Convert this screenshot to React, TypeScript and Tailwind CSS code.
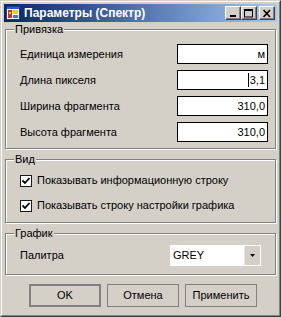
import React from 'react';

const font = "font-['Liberation_Sans',Arial,sans-serif]";

function TitleIcon() {
    return (
        <svg width="14" height="14" viewBox="0 0 14 14" className="shrink-0">
            <rect x="0.5" y="0.5" width="13" height="13" fill="#ffffff" stroke="#1c3c8c" />
            <rect x="1" y="1" width="12" height="2" fill="#2a5ad0" />
            <rect x="2" y="4" width="4" height="8" fill="#d83020" />
            <rect x="3" y="6" width="2" height="2" fill="#f8d048" />
            <rect x="7" y="4" width="5" height="4" fill="#f8c800" />
            <rect x="7" y="9" width="5" height="3" fill="#3a78e0" />
        </svg>
    );
}

function CaptionButton({ kind }: { kind: 'min' | 'max' | 'close' }) {
    return (
        <div className="flex h-[14px] w-[16px] items-center justify-center border border-t-white border-l-white border-r-[#404040] border-b-[#404040] bg-[#d4d0c8] shadow-[inset_-1px_-1px_0_#808080]">
            <svg width="10" height="9" viewBox="0 0 10 9">
                {kind === 'min' && <rect x="2" y="6" width="6" height="2" fill="#000" />}
                {kind === 'max' && (
                    <g fill="none" stroke="#000">
                        <rect x="0.5" y="0.5" width="8" height="7.5" />
                        <line x1="0" y1="1.5" x2="9" y2="1.5" />
                    </g>
                )}
                {kind === 'close' && (
                    <g stroke="#000" strokeWidth="1.6">
                        <line x1="1.5" y1="1" x2="8" y2="8" />
                        <line x1="8" y1="1" x2="1.5" y2="8" />
                    </g>
                )}
            </svg>
        </div>
    );
}

function Group({ title, className, children }: { title: string; className: string; children: React.ReactNode }) {
    return (
        <div className={`relative mx-[1px] border border-[#808080] shadow-[inset_1px_1px_0_#fff,1px_1px_0_#fff] ${className}`}>
            <span className="absolute -top-[8px] left-[8px] bg-[#d4d0c8] px-[1px] leading-[14px]">{title}</span>
            {children}
        </div>
    );
}

function Field({ label, value, caret }: { label: string; value: string; caret?: boolean }) {
    return (
        <div className="flex h-[20px] items-center justify-between">
            <span>{label}</span>
            <div className="flex h-[20px] w-[91px] items-center justify-end border border-black bg-white pr-[2px]">
                {caret && <span className="mr-[1px] h-[14px] w-[1px] bg-black" />}
                <span className="leading-none">{value}</span>
            </div>
        </div>
    );
}

function Check({ label }: { label: string }) {
    return (
        <div className="flex h-[15px] items-center gap-[5px]">
            <div className="flex h-[12px] w-[12px] items-center justify-center border border-[#1a1a1a] bg-white">
                <svg width="10" height="10" viewBox="0 0 10 10">
                    <polyline points="1.5,4.5 4,7 8.5,2" fill="none" stroke="#000" strokeWidth="1.8" />
                </svg>
            </div>
            <span>{label}</span>
        </div>
    );
}

export default function App() {
    return (
        <div className={`h-[317px] w-[281px] border border-t-[#d4d0c8] border-l-[#d4d0c8] border-r-[#404040] border-b-[#404040] bg-[#d4d0c8] text-[11px] text-black ${font}`}>
            <div className="flex h-full flex-col border border-t-white border-l-white border-r-[#808080] border-b-[#808080] p-[2px]">
                <div className="flex h-[18px] items-center bg-gradient-to-r from-[#0a246a] to-[#a6caf0] pl-[2px] pr-[2px]">
                    <TitleIcon />
                    <span className="ml-[4px] text-[12px] font-bold text-white">Параметры (Спектр)</span>
                    <div className="ml-auto flex items-center">
                        <CaptionButton kind="min" />
                        <CaptionButton kind="max" />
                        <div className="w-[2px]" />
                        <CaptionButton kind="close" />
                    </div>
                </div>

                <Group title="Привязка" className="mt-[7px] h-[120px]">
                    <div className="flex flex-col gap-[6px] pl-[14px] pr-[7px] pt-[14px]">
                        <Field label="Единица измерения" value="м" />
                        <Field label="Длина пикселя" value="3,1" caret />
                        <Field label="Ширина фрагмента" value="310,0" />
                        <Field label="Высота фрагмента" value="310,0" />
                    </div>
                </Group>

                <Group title="Вид" className="mt-[10px] h-[64px]">
                    <div className="flex flex-col gap-[10px] pl-[14px] pt-[13px]">
                        <Check label="Показывать информационную строку" />
                        <Check label="Показывать строку настройки графика" />
                    </div>
                </Group>

                <Group title="График" className="mt-[10px] h-[42px]">
                    <div className="flex items-center justify-between pl-[14px] pr-[14px] pt-[11px]">
                        <span>Палитра</span>
                        <div className="flex h-[21px] w-[91px] items-center border border-white bg-white">
                            <span className="pl-[2px]">GREY</span>
                            <div className="ml-auto flex h-full w-[16px] items-center justify-center border-l border-[#e8e6e0] bg-[#d4d0c8]">
                                <svg width="5" height="3" viewBox="0 0 5 3">
                                    <polygon points="0,0 5,0 2.5,3" fill="#000" />
                                </svg>
                            </div>
                        </div>
                    </div>
                </Group>

                <div className="ml-[25px] mt-[9px] flex gap-[6px]">
                    <button className="flex h-[23px] w-[72px] items-center justify-center border-2 border-[#808080]">OK</button>
                    <button className="flex h-[23px] w-[72px] items-center justify-center border border-[#808080]">Отмена</button>
                    <button className="flex h-[23px] w-[72px] items-center justify-center border border-[#808080]">Применить</button>
                </div>
            </div>
        </div>
    );
}
